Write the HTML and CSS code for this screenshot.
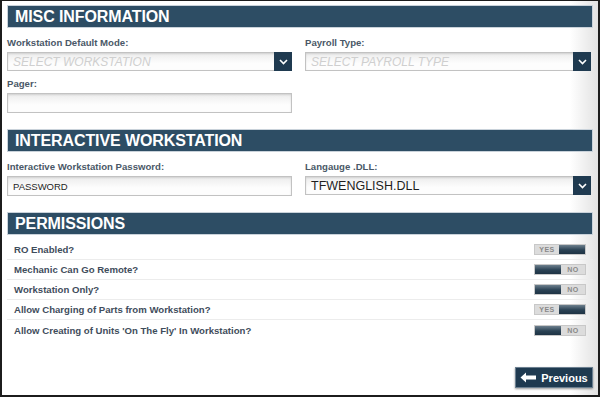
FILE: index.html
```html
<!DOCTYPE html>
<html lang="en">
<head>
    <meta charset="UTF-8">
    <title>Workstation Settings</title>
    <link rel="stylesheet" href="styles.css">
</head>
<body>
    <div class="frame">
        <div class="section-title">MISC INFORMATION</div>
        <div class="fields">
            <div class="field">
                <label>Workstation Default Mode:</label>
                <div class="select">
                    <span class="placeholder">SELECT WORKSTATION</span>
                    <span class="caret"><svg width="9" height="6" viewBox="0 0 9 6"><path d="M1 1l3.5 3.5L8 1" fill="none" stroke="#fff" stroke-width="1.6"/></svg></span>
                </div>
            </div>
            <div class="field">
                <label>Payroll Type:</label>
                <div class="select">
                    <span class="placeholder">SELECT PAYROLL TYPE</span>
                    <span class="caret"><svg width="9" height="6" viewBox="0 0 9 6"><path d="M1 1l3.5 3.5L8 1" fill="none" stroke="#fff" stroke-width="1.6"/></svg></span>
                </div>
            </div>
            <div class="field">
                <label>Pager:</label>
                <div class="input"></div>
            </div>
        </div>

        <div class="section-title">INTERACTIVE WORKSTATION</div>
        <div class="fields">
            <div class="field">
                <label>Interactive Workstation Password:</label>
                <div class="input small">PASSWORD</div>
            </div>
            <div class="field">
                <label>Langauge .DLL:</label>
                <div class="select">
                    <span class="value">TFWENGLISH.DLL</span>
                    <span class="caret"><svg width="9" height="6" viewBox="0 0 9 6"><path d="M1 1l3.5 3.5L8 1" fill="none" stroke="#fff" stroke-width="1.6"/></svg></span>
                </div>
            </div>
        </div>

        <div class="section-title">PERMISSIONS</div>
        <div class="perms">
            <div class="perm"><span>RO Enabled?</span><span class="toggle on"><i>YES</i><b></b></span></div>
            <div class="perm"><span>Mechanic Can Go Remote?</span><span class="toggle off"><b></b><i>NO</i></span></div>
            <div class="perm"><span>Workstation Only?</span><span class="toggle off"><b></b><i>NO</i></span></div>
            <div class="perm"><span>Allow Charging of Parts from Workstation?</span><span class="toggle on"><i>YES</i><b></b></span></div>
            <div class="perm"><span>Allow Creating of Units 'On The Fly' In Workstation?</span><span class="toggle off"><b></b><i>NO</i></span></div>
        </div>

        <div class="footer">
            <button class="btn-prev">
                <svg width="17" height="11" viewBox="0 0 17 11"><path d="M0.5 5.5L6 0.5V3.5H16V7.5H6V10.5Z" fill="#fff"/></svg>
                Previous
            </button>
        </div>
    </div>
</body>
</html>
```

FILE: styles.css
```css
* {
    margin: 0;
    padding: 0;
    box-sizing: border-box;
}

body {
    font-family: "Liberation Sans", Arial, sans-serif;
    background: #fff;
}

.frame {
    width: 600px;
    height: 397px;
    border: 2px solid #1c1c1c;
    border-top-width: 1px;
    background: linear-gradient(to right, #fff calc(100% - 28px), #e2e2e2);
    padding: 4px 5px 0 5px;
}

.section-title {
    height: 23px;
    background: #2d4d64;
    border: 1px solid #c9d2da;
    color: #fff;
    font-size: 16px;
    font-weight: bold;
    line-height: 21px;
    padding-left: 7px;
    letter-spacing: -0.1px;
}

.fields {
    display: grid;
    grid-template-columns: 285px 286px;
    column-gap: 13px;
    row-gap: 7px;
    padding: 9px 0 16px 0;
}

.field label {
    display: block;
    font-size: 9.6px;
    font-weight: bold;
    color: #4a5867;
    line-height: 12px;
    margin-bottom: 3px;
}

.select,
.input {
    height: 20px;
    border: 1px solid #c2c2c2;
    background: linear-gradient(#ececec, #fdfdfd 60%);
    box-shadow: inset 0 1px 2px rgba(0,0,0,0.12);
    display: flex;
    align-items: center;
    padding-left: 5px;
}

.select {
    height: 19px;
}

.placeholder {
    flex: 1;
    font-size: 12px;
    font-style: italic;
    color: #cfcfcf;
}

.value {
    flex: 1;
    font-size: 12.5px;
    color: #1e1e1e;
}

.input.small {
    font-size: 9.5px;
    color: #1e1e1e;
}

.caret {
    width: 18px;
    height: 19px;
    margin-right: -1px;
    background: #1f3a50;
    display: flex;
    align-items: center;
    justify-content: center;
}

.perms {
    padding: 5px 0 0 0;
}

.perm {
    height: 20px;
    display: flex;
    align-items: center;
    justify-content: space-between;
    padding: 0 7px 0 7px;
    border-bottom: 1px solid #ececec;
    font-size: 9.6px;
    font-weight: bold;
    color: #3f4d5c;
}

.perm:last-child {
    border-bottom: none;
}

.toggle {
    display: flex;
    width: 52px;
    height: 11px;
    border: 1px solid #c8c8c8;
    background: #dcdcdc;
}

.toggle i {
    flex: 1;
    font-style: normal;
    font-size: 7px;
    font-weight: bold;
    color: #888;
    line-height: 9px;
    letter-spacing: 0.5px;
    text-align: center;
}

.toggle b {
    width: 26px;
    background: linear-gradient(#6d7f8d, #2a4254 55%, #1e3344);
}

.footer {
    display: flex;
    justify-content: flex-end;
    padding-top: 27px;
}

.btn-prev {
    width: 78px;
    height: 21px;
    background: #1f3a50;
    border: 1px solid #6b7f90;
    box-shadow: 0 1px 2px rgba(0,0,0,0.4);
    color: #fff;
    font-family: "Liberation Sans", Arial, sans-serif;
    font-size: 11px;
    font-weight: bold;
    display: flex;
    align-items: center;
    justify-content: center;
    gap: 4px;
}
```
